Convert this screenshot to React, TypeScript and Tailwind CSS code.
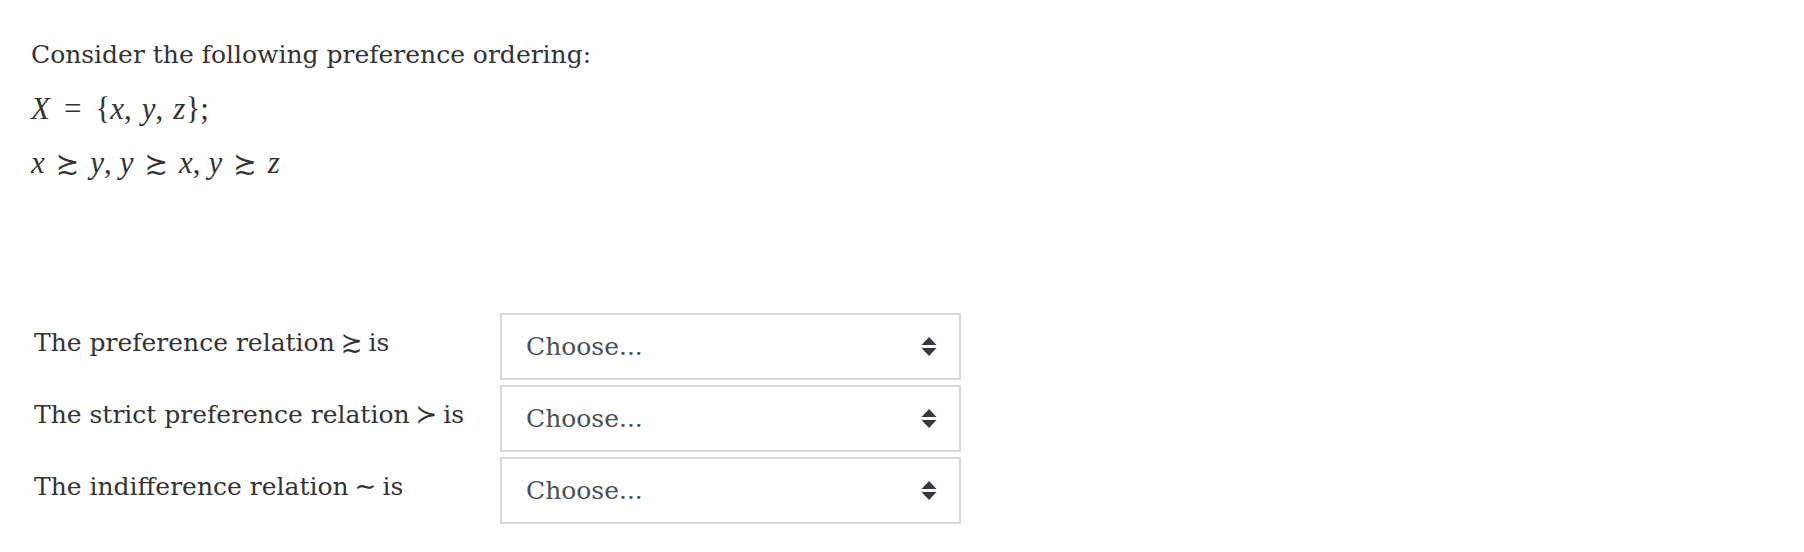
import React from 'react';

const body = "font-['DejaVu_Serif',serif]";
const mathCls = "font-['Liberation_Serif',serif]";

const Updown = () => (
  <svg width="16" height="20" viewBox="0 0 16 20" className="shrink-0">
    <path d="M8 0 L15.5 8 L0.5 8 Z" fill="#343a40" />
    <path d="M0.5 11 L15.5 11 L8 19 Z" fill="#343a40" />
  </svg>
);

const Rel = ({ ch, size = 'text-[26px]', gap = 'mx-[6px]' }: { ch: string; size?: string; gap?: string }) => (
  <span className={`font-['DejaVu_Sans',sans-serif] ${size} ${gap}`}>{ch}</span>
);

const ROWS = [
  { id: 'pref', label: <>The preference relation<Rel ch="≿" />is</> },
  { id: 'strict', label: <>The strict preference relation<Rel ch="≻" />is</> },
  { id: 'indiff', label: <>The indifference relation<Rel ch="∼" />is</> },
];

const App: React.FC = () => {
  return (
    <div className={`w-[1804px] h-[552px] bg-white text-[#333333] ${body} text-[25px] leading-[40px]`}>
      <div className="pl-[31px] pt-[35px]">
        <p className="mb-[14px]">Consider the following preference ordering:</p>
        <p className={`mb-[14px] ${mathCls} text-[31px]`}>
          <i>X</i><span className="mx-[14px]">=</span>{'{'}<i>x</i>,<span className="mx-[5px]" /><i>y</i>,<span className="mx-[5px]" /><i>z</i>{'}'};
        </p>
        <p className={`${mathCls} text-[31px]`}>
          <i>x</i><Rel ch="≿" size="text-[28px]" gap="mx-[11px]" /><i>y</i>,<span className="mx-[4px]" /><i>y</i><Rel ch="≿" size="text-[28px]" gap="mx-[11px]" /><i>x</i>,<span className="mx-[4px]" /><i>y</i><Rel ch="≿" size="text-[28px]" gap="mx-[11px]" /><i>z</i>
        </p>
      </div>

      {/* answer rows */}
      <div className="pl-[34px] mt-[129px] flex flex-col gap-[5px]">
        {ROWS.map((row) => (
          <div key={row.id} className="flex items-center">
            <div className="w-[466px] pb-[8px]">{row.label}</div>
            <div className="w-[461px] h-[67px] border-2 border-[#d6dadf] flex items-center justify-between pl-[24px] pr-[22px] text-[#495057]">
              <span>Choose...</span>
              <Updown />
            </div>
          </div>
        ))}
      </div>
    </div>
  );
};

export default App;
